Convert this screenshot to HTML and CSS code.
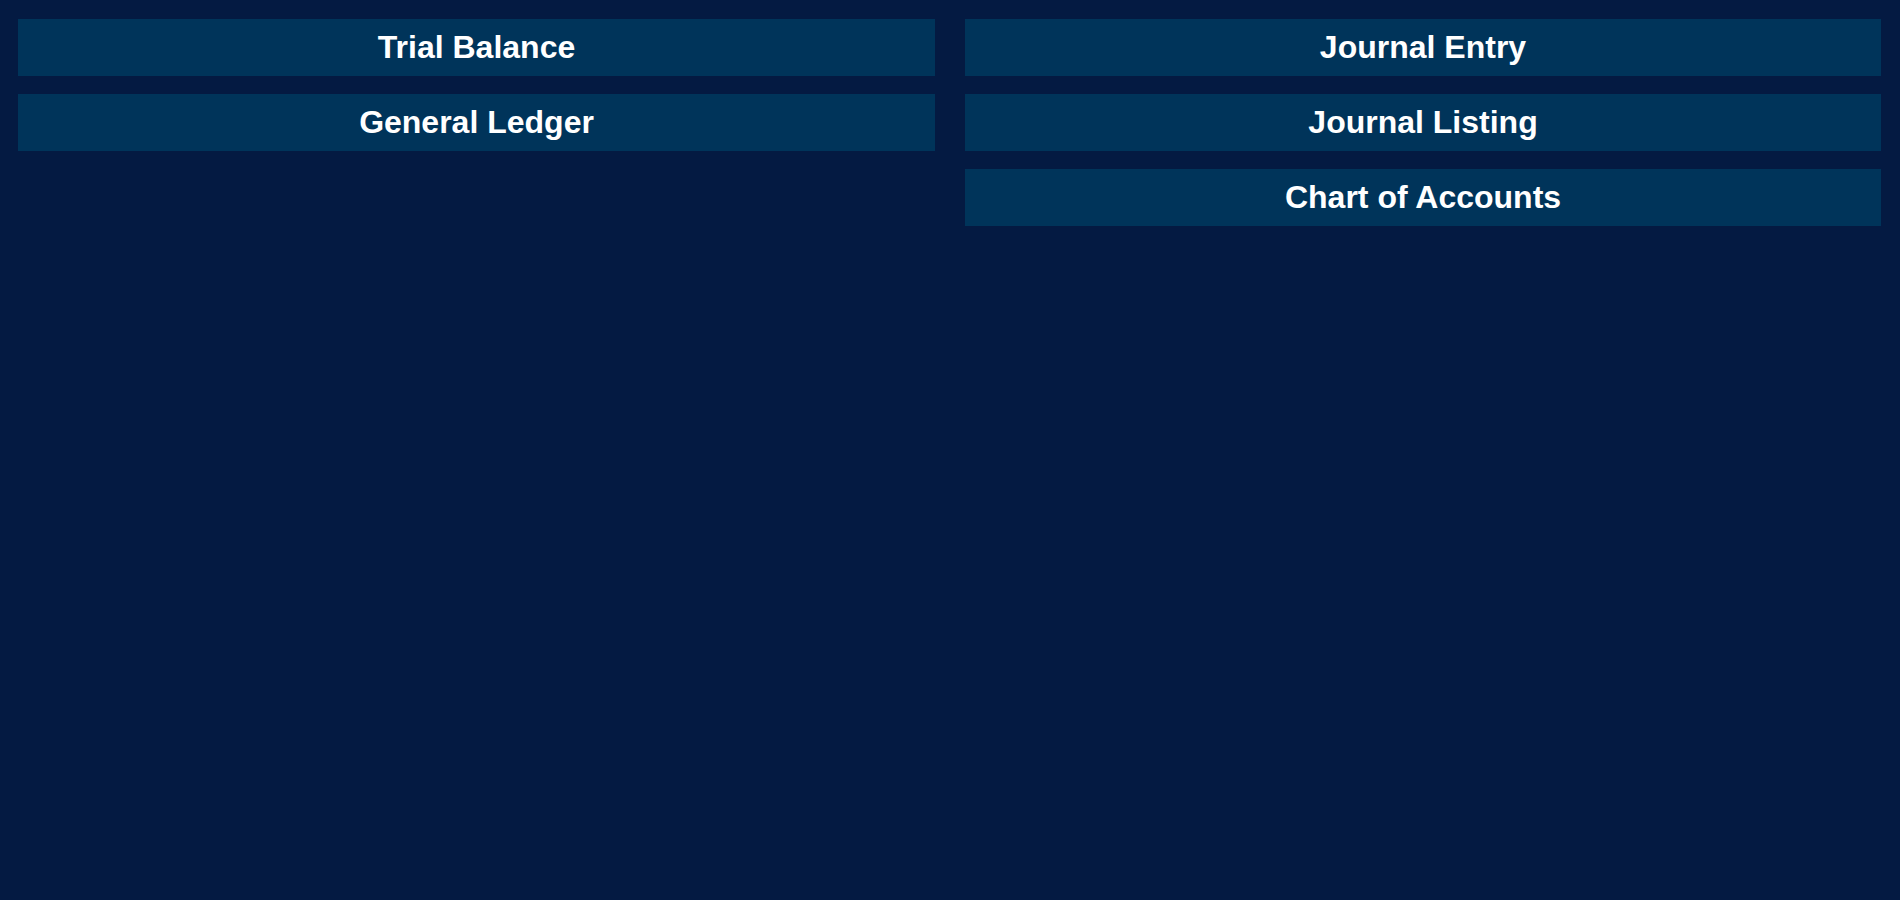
FILE: index.html
```html
<!DOCTYPE html>
<html>
<head>
<meta charset="utf-8">
<link rel="stylesheet" href="styles.css">
</head>
<body>
<div class="menu">
  <div class="col">
    <div class="btn">Trial Balance</div>
    <div class="btn">General Ledger</div>
  </div>
  <div class="col">
    <div class="btn">Journal Entry</div>
    <div class="btn">Journal Listing</div>
    <div class="btn">Chart of Accounts</div>
  </div>
</div>
</body>
</html>
```
FILE: styles.css
```css
html, body {
  margin: 0;
  padding: 0;
  height: 100%;
  background: #041a42;
}
body {
  font-family: "Liberation Sans", Arial, sans-serif;
}
.menu {
  display: grid;
  grid-template-columns: 917px 916px;
  column-gap: 30px;
  padding: 19px 19px 0 18px;
  align-items: start;
}
.col {
  display: flex;
  flex-direction: column;
  gap: 18px;
}
.btn {
  height: 57px;
  background: #00345a;
  color: #ffffff;
  font-weight: bold;
  font-size: 32px;
  display: flex;
  align-items: center;
  justify-content: center;
}
```
